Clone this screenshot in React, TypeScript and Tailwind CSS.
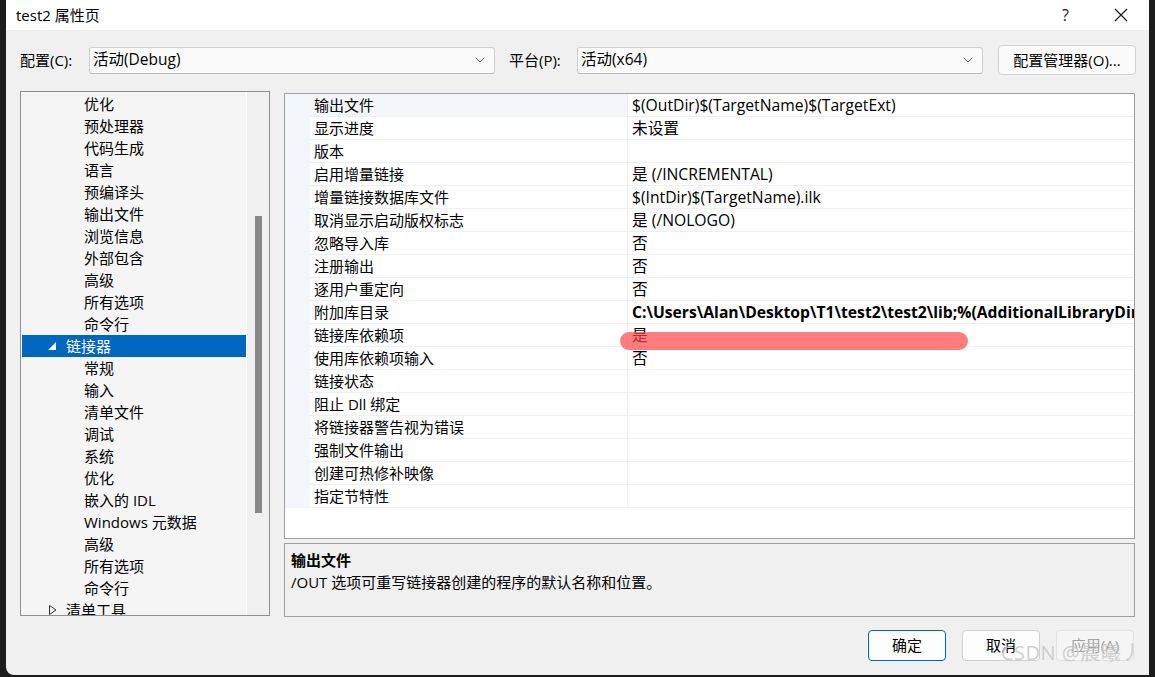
const treeTop = ["优化", "预处理器", "代码生成", "语言", "预编译头", "输出文件", "浏览信息", "外部包含", "高级", "所有选项", "命令行"];
const linkerItems = ["常规", "输入", "清单文件", "调试", "系统", "优化", "嵌入的 IDL", "Windows 元数据", "高级", "所有选项", "命令行"];

const props: [string, string, boolean?][] = [
  ["输出文件", "$(OutDir)$(TargetName)$(TargetExt)"],
  ["显示进度", "未设置"],
  ["版本", ""],
  ["启用增量链接", "是 (/INCREMENTAL)"],
  ["增量链接数据库文件", "$(IntDir)$(TargetName).ilk"],
  ["取消显示启动版权标志", "是 (/NOLOGO)"],
  ["忽略导入库", "否"],
  ["注册输出", "否"],
  ["逐用户重定向", "否"],
  ["附加库目录", "C:\\Users\\Alan\\Desktop\\T1\\test2\\test2\\lib;%(AdditionalLibraryDirectories)", true],
  ["链接库依赖项", "是"],
  ["使用库依赖项输入", "否"],
  ["链接状态", ""],
  ["阻止 Dll 绑定", ""],
  ["将链接器警告视为错误", ""],
  ["强制文件输出", ""],
  ["创建可热修补映像", ""],
  ["指定节特性", ""],
];

const font = "font-['Open_Sans','Noto_Sans_CJK_SC',sans-serif]";

const Chevron = () => (
  <svg width="12" height="8" viewBox="0 0 12 8" className="shrink-0">
    <path d="M1.5 1.5 L6 6 L10.5 1.5" fill="none" stroke="#5a5a5a" strokeWidth="1" />
  </svg>
);

const Combo = ({ value, width }: { value: string; width: string }) => (
  <div className={`${width} h-[27px] bg-[#fbfbfb] border border-[#cfcfcf] border-b-[#b8b8b8] rounded-[3px] flex items-center pl-[3px] pr-[8px]`}>
    <span className="flex-1 text-[15.5px] leading-none text-black">{value}</span>
    <Chevron />
  </div>
);

const Btn = ({ label, primary, disabled }: { label: string; primary?: boolean; disabled?: boolean }) => (
  <div
    className={`w-[78px] h-[31px] rounded-[4px] flex items-center justify-center text-[15px] leading-none ${
      primary ? "border border-[#0067c0] bg-[#fdfdfd] text-black" : disabled ? "border border-[#e2e2e2] bg-[#f5f5f5] text-[#a0a0a0]" : "border border-[#d0d0d0] bg-[#fdfdfd] text-black"
    }`}
  >
    {label}
  </div>
);

export default function App() {
  return (
    <div className={`w-[1155px] h-[677px] bg-[#1c1c1c] flex ${font} relative overflow-hidden`}>
      <div className="ml-[6px] w-[1143px] h-[675px] bg-[#f0f0f0] rounded-bl-[8px] flex flex-col overflow-hidden">
        {/* title bar */}
        <div className="h-[30px] bg-white flex items-center pl-[10px] shrink-0">
          <span className="flex-1 text-[15px] leading-none text-black">test2 属性页</span>
          <span className="text-[16px] leading-none text-[#1a1a1a] mr-[45px]">?</span>
          <svg width="14" height="14" viewBox="0 0 14 14" className="mr-[21px]">
            <path d="M1 1 L13 13 M13 1 L1 13" stroke="#1a1a1a" strokeWidth="1.2" />
          </svg>
        </div>

        {/* config row */}
        <div className="h-[30px] mt-[15px] flex items-center pl-[14px] shrink-0">
          <span className="text-[15px] leading-none text-black w-[69px]">配置(C):</span>
          <Combo value="活动(Debug)" width="w-[406px]" />
          <span className="text-[15px] leading-none text-black ml-[14px] w-[68px]">平台(P):</span>
          <Combo value="活动(x64)" width="w-[406px]" />
          <div className="ml-[15px] w-[138px] h-[30px] bg-[#fbfbfb] border border-[#d0d0d0] rounded-[4px] flex items-center justify-center text-[15px] leading-none text-black">
            配置管理器(O)...
          </div>
        </div>

        {/* panels */}
        <div className="flex mt-[16px] pl-[14px] shrink-0">
          {/* tree */}
          <div className="w-[250px] h-[525px] border border-[#8e9095] bg-[#f5f5f5] flex overflow-hidden">
            <div className="w-[226px] pt-[1px] flex flex-col border-r border-white">
              {treeTop.map((t, i) => (
                <div key={"a" + i} className="h-[22px] shrink-0 flex items-center pl-[63px] text-[15px] leading-none text-black">{t}</div>
              ))}
              <div className="h-[22px] shrink-0 flex items-center bg-[#0067c0] text-white text-[15px] leading-none ml-[1px]">
                <svg width="8" height="8" viewBox="0 0 8 8" className="ml-[26px] mr-[10px]">
                  <path d="M8 0 L8 8 L0 8 Z" fill="white" />
                </svg>
                链接器
              </div>
              {linkerItems.map((t, i) => (
                <div key={"b" + i} className="h-[22px] shrink-0 flex items-center pl-[63px] text-[15px] leading-none text-black">{t}</div>
              ))}
              <div className="h-[22px] shrink-0 flex items-center text-[15px] leading-none text-black">
                <svg width="8" height="10" viewBox="0 0 8 10" className="ml-[28px] mr-[9px]">
                  <path d="M0.5 0.5 L7 5 L0.5 9.5 Z" fill="none" stroke="#333" strokeWidth="1" />
                </svg>
                清单工具
              </div>
            </div>
            <div className="flex-1 bg-[#f0f0f0] flex justify-center pt-[124px]">
              <div className="w-[7px] h-[297px] bg-[#888888]" />
            </div>
          </div>

          {/* right column */}
          <div className="ml-[14px] w-[851px] flex flex-col">
            <div className="mt-[2px] h-[446px] border border-[#a0a0a0] bg-white flex flex-col">
              {props.map(([name, value, bold], i) => (
                <div key={i} className="h-[23px] shrink-0 flex">
                  <div className="w-[25px] bg-[#f3f6fb] shrink-0" />
                  <div className={`w-[318px] shrink-0 border-b border-r border-[#eef0f5] flex items-center pl-[4px] pt-[1px] text-[15px] leading-none text-black ${i === 0 ? "bg-[#f3f6fb]" : ""}`}>
                    {name}
                  </div>
                  <div className={`flex-1 border-b border-[#eef0f5] flex items-center pl-[4px] pt-[1px] text-[15.7px] leading-none text-black whitespace-nowrap overflow-hidden ${bold ? "font-bold" : ""}`}>
                    {value}
                  </div>
                </div>
              ))}
              <div className="flex-1" />
            </div>
            <div className="mt-[4px] h-[74px] border border-[#a0a0a0] bg-[#f0f0f0] flex flex-col pl-[6px] pt-[5px]">
              <div className="text-[15px] leading-[22px] font-bold text-black">输出文件</div>
              <div className="text-[15px] leading-[22px] text-black">/OUT 选项可重写链接器创建的程序的默认名称和位置。</div>
            </div>
          </div>
        </div>

        {/* buttons */}
        <div className="flex justify-end gap-[16px] pr-[15px] mt-[13px]">
          <Btn label="确定" primary />
          <Btn label="取消" />
          <Btn label="应用(A)" disabled />
        </div>
      </div>

      {/* red annotation stroke */}
      <div className="absolute left-[620px] top-[332px] w-[348px] h-[18px] rounded-full bg-[rgba(255,70,70,0.7)]" />
      {/* watermark */}
      <div className="absolute left-[1001px] top-[643px] text-[20px] leading-none text-[rgba(200,200,200,0.85)] tracking-[0.5px]">CSDN @晨曦丿</div>
    </div>
  );
}
